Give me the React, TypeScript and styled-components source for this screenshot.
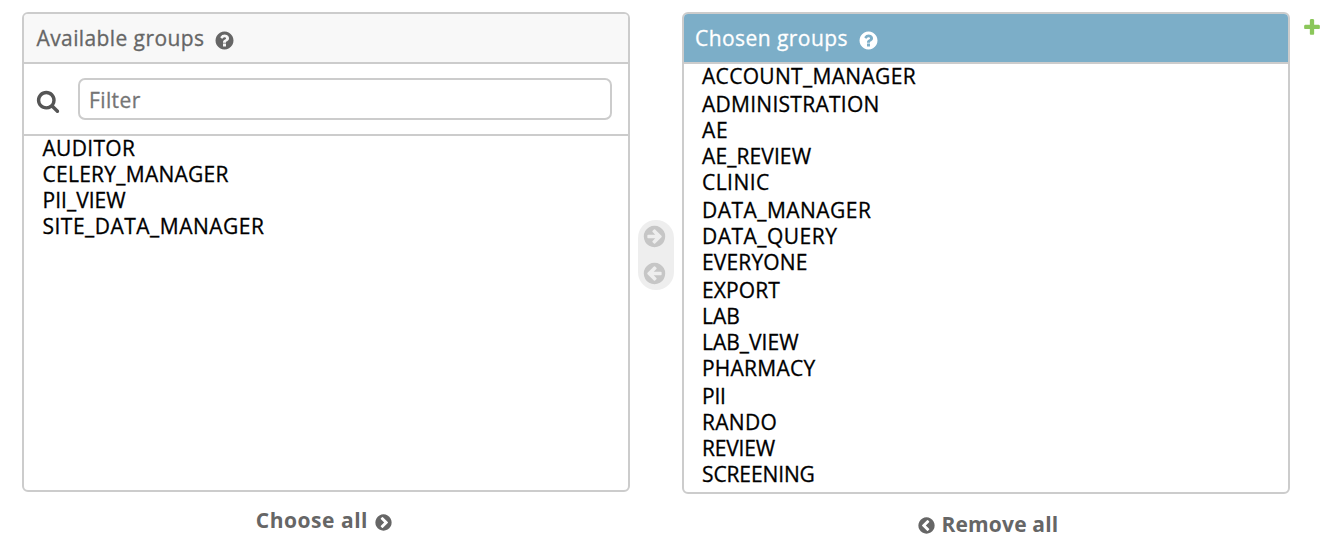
import React from 'react';
import styled, { createGlobalStyle } from 'styled-components';

const GlobalStyle = createGlobalStyle`
  * { box-sizing: border-box; }
  body {
    margin: 0;
    background: #fff;
    color: #666;
    font-family: "Open Sans", sans-serif;
    font-size: 21px;
    overflow: hidden;
  }
`;

const Selector = styled.main`
  display: flex;
  align-items: flex-start;
  width: 1340px;
  height: 548px;
  padding: 12px 0 0 22px;
`;

const Column = styled.section`
  width: 608px;
  flex: none;
`;

const Panel = styled.div<{ $height: number }>`
  display: flex;
  flex-direction: column;
  height: ${(p) => p.$height}px;
  border: 2px solid #ccc;
  border-radius: 6px;
  overflow: hidden;
  background: #fff;
  -webkit-text-stroke: 0.3px currentColor;
`;

const Heading = styled.h2<{ $chosen?: boolean }>`
  display: flex;
  align-items: center;
  flex: none;
  height: 50px;
  margin: 0;
  padding-left: ${(p) => (p.$chosen ? 11 : 12.5)}px;
  border-bottom: 2px solid #ccc;
  background: ${(p) => (p.$chosen ? '#7caec8' : '#f8f8f8')};
  color: ${(p) => (p.$chosen ? '#fff' : '#666')};
  font-size: 21px;
  font-weight: 400;
  line-height: 48px;
`;

const Label = styled.span<{ $tracking: number }>`
  letter-spacing: ${(p) => p.$tracking}px;
  white-space: pre;
`;

const HelpIcon = styled.span`
  display: flex;
  margin: 5px 0 0 10px;
`;

const FilterBar = styled.div`
  display: flex;
  align-items: center;
  flex: none;
  height: 72px;
  padding: 0 16px 0 12px;
  border-bottom: 2px solid #ccc;
`;

const SearchIcon = styled.span`
  display: flex;
  width: 42px;
  padding-top: 3px;
`;

const FilterInput = styled.input`
  flex: 1;
  min-width: 0;
  height: 42px;
  padding: 1px 8px 0 9px;
  border: 2px solid #ccc;
  border-radius: 7px;
  outline: none;
  background: #fff;
  color: #333;
  font: 21px "Open Sans", sans-serif;
  letter-spacing: 0.39px;
  &::placeholder { color: #757575; opacity: 1; }
`;

const List = styled.ul<{ $inset: number }>`
  margin: 0;
  padding: 0 0 0 ${(p) => p.$inset}px;
  list-style: none;
  color: #000;
`;

const Option = styled.li<{ $tall?: boolean }>`
  height: ${(p) => (p.$tall ? 28 : 26)}px;
  line-height: 24px;
`;

const BulkAction = styled.a<{ $height: number; $inset: number }>`
  display: flex;
  align-items: center;
  height: ${(p) => p.$height}px;
  padding-left: ${(p) => p.$inset}px;
  font-weight: 700;
`;

const ActionIcon = styled.span<{ $before?: boolean }>`
  display: flex;
  margin: ${(p) => (p.$before ? '2px 6px 0 0' : '4px 0 0 6px')};
`;

const MoveButtons = styled.div`
  display: flex;
  flex-direction: column;
  align-items: center;
  justify-content: space-between;
  flex: none;
  width: 36px;
  height: 70px;
  margin: 208px 8px 0;
  padding: 4px 3px 4px 0;
  border-radius: 18px;
  background: #eee;
`;

const AddLink = styled.a`
  display: flex;
  margin: 5px 0 0 12px;
`;

const DISC =
  'zM1664 896q0 209-103 385.5t-279.5 279.5-385.5 103-385.5-103-279.5-279.5-103-385.5 103-385.5 279.5-279.5 385.5-103 385.5 103 279.5 279.5 103 385.5z';

const PATHS = {
  help:
    'M1024 1376v-192q0-14-9-23t-23-9h-192q-14 0-23 9t-9 23v192q0 14 9 23t23 9h192q14 0 23-9t9-23zm256-672q0-88-55.5-163t-138.5-116-170-41q-243 0-371 213-15 24 8 42l132 100q7 6 19 6 16 0 25-12 53-68 86-92 34-24 86-24 48 0 85.5 26t37.5 59q0 38-20 61t-68 45q-63 28-115.5 86.5t-52.5 125.5v36q0 14 9 23t23 9h192q14 0 23-9t9-23q0-19 21.5-49.5t54.5-49.5q32-18 49-28.5t46-35 44.5-48 28-60.5 12.5-81' + DISC,
  search:
    'M1216 832q0-185-131.5-316.5t-316.5-131.5-316.5 131.5-131.5 316.5 131.5 316.5 316.5 131.5 316.5-131.5 131.5-316.5zm512 832q0 52-38 90t-90 38q-54 0-90-38l-343-342q-179 124-399 124-143 0-273.5-55.5t-225-150-150-225-55.5-273.5 55.5-273.5 150-225 225-150 273.5-55.5 273.5 55.5 225 150 150 225 55.5 273.5q0 220-124 399l343 343q37 37 37 90z',
  arrow:
    'M1413 896q0-27-18-45l-91-91-362-362q-18-18-45-18t-45 18l-91 91q-18 18-18 45t18 45l189 189h-502q-26 0-45 19t-19 45v128q0 26 19 45t45 19h502l-189 189q-18 18-18 45t18 45l91 91q18 18 45 18t45-18l362-362 91-91q18-18 18-45' + DISC,
  chevron:
    'M845 1395l454-454q19-19 19-45t-19-45l-454-454q-19-19-45-19t-45 19l-102 102q-19 19-19 45t19 45l307 307-307 307q-19 19-19 45t19 45l102 102q19 19 45 19t45-19' + DISC,
  plus:
    'M1600 796v192q0 40-28 68t-68 28h-416v416q0 40-28 68t-68 28h-192q-40 0-68-28t-28-68v-416h-416q-40 0-68-28t-28-68v-192q0-40 28-68t68-28h416v-416q0-40 28-68t68-28h192q40 0 68 28t28 68v416h416q40 0 68 28t28 68z',
};

type IconProps = { name: keyof typeof PATHS; size: number; color: string; flip?: boolean };

function Icon({ name, size, color, flip }: IconProps) {
  return (
    <svg width={size} height={size} viewBox="0 0 1792 1792" fill={color} stroke="none" aria-hidden="true">
      <path d={PATHS[name]} transform={flip ? 'translate(1792 0) scale(-1 1)' : undefined} />
    </svg>
  );
}

type Group = { name: string; tracking: number; tall?: boolean };

const AVAILABLE: Group[] = [
  { name: 'AUDITOR', tracking: 0.3 },
  { name: 'CELERY_MANAGER', tracking: 0.26 },
  { name: 'PII_VIEW', tracking: 0.02 },
  { name: 'SITE_DATA_MANAGER', tracking: 0.49 },
];

const CHOSEN: Group[] = [
  { name: 'ACCOUNT_MANAGER', tracking: 0.32, tall: true },
  { name: 'ADMINISTRATION', tracking: 0.27 },
  { name: 'AE', tracking: 0.8 },
  { name: 'AE_REVIEW', tracking: 0.1 },
  { name: 'CLINIC', tracking: 0.45, tall: true },
  { name: 'DATA_MANAGER', tracking: 0.47 },
  { name: 'DATA_QUERY', tracking: 0.48 },
  { name: 'EVERYONE', tracking: 0.15, tall: true },
  { name: 'EXPORT', tracking: 0.1 },
  { name: 'LAB', tracking: 0 },
  { name: 'LAB_VIEW', tracking: 0.01 },
  { name: 'PHARMACY', tracking: 0.24, tall: true },
  { name: 'PII', tracking: -0.2 },
  { name: 'RANDO', tracking: 0.3 },
  { name: 'REVIEW', tracking: -0.2 },
  { name: 'SCREENING', tracking: -0.12 },
];

function GroupList({ groups, inset }: { groups: Group[]; inset: number }) {
  return (
    <List $inset={inset}>
      {groups.map((g) => (
        <Option key={g.name} $tall={g.tall}>
          <Label $tracking={g.tracking}>{g.name}</Label>
        </Option>
      ))}
    </List>
  );
}

export default function App() {
  return (
    <>
      <GlobalStyle />
      <Selector>
        <Column>
          <Panel $height={480}>
            <Heading>
              <Label $tracking={0.4}>Available groups</Label>
              <HelpIcon><Icon name="help" size={21} color="#666" /></HelpIcon>
            </Heading>
            <FilterBar>
              <SearchIcon><Icon name="search" size={24} color="#555" /></SearchIcon>
              <FilterInput placeholder="Filter" />
            </FilterBar>
            <GroupList groups={AVAILABLE} inset={18.5} />
          </Panel>
          <BulkAction $height={56} $inset={233.8}>
            <Label $tracking={0.52}>Choose all</Label>
            <ActionIcon><Icon name="chevron" size={19} color="#666" /></ActionIcon>
          </BulkAction>
        </Column>
        <MoveButtons>
          <Icon name="arrow" size={25} color="#c6c6c6" />
          <Icon name="arrow" size={25} color="#c6c6c6" flip />
        </MoveButtons>
        <Column>
          <Panel $height={482}>
            <Heading $chosen>
              <Label $tracking={0.44}>Chosen groups</Label>
              <HelpIcon><Icon name="help" size={21} color="#fff" /></HelpIcon>
            </Heading>
            <GroupList groups={CHOSEN} inset={18} />
          </Panel>
          <BulkAction $height={60} $inset={234.5}>
            <ActionIcon $before><Icon name="chevron" size={19} color="#666" flip /></ActionIcon>
            <Label $tracking={0.16}>Remove all</Label>
          </BulkAction>
        </Column>
        <AddLink><Icon name="plus" size={20} color="#8bc75a" /></AddLink>
      </Selector>
    </>
  );
}
